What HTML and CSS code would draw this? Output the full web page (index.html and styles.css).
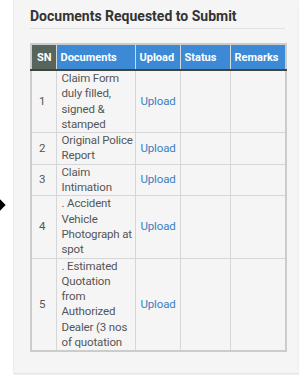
FILE: index.html
```html
<!DOCTYPE html>
<html>
<head>
<meta charset="utf-8">
<link rel="stylesheet" href="styles.css">
</head>
<body>
<span class="bullet"></span>
<div class="card">
  <h2 class="title">Documents Requested to Submit</h2>
  <hr class="rule">
  <table class="docs">
    <colgroup>
      <col class="c-sn"><col class="c-doc"><col class="c-up"><col class="c-st"><col class="c-re">
    </colgroup>
    <thead>
      <tr>
        <th class="sn-h">SN</th>
        <th>Documents</th>
        <th>Upload</th>
        <th>Status</th>
        <th>Remarks</th>
      </tr>
    </thead>
    <tbody>
      <tr><td class="sn">1</td><td>Claim Form duly filled, signed &amp; stamped</td><td><a class="up">Upload</a></td><td></td><td></td></tr>
      <tr><td class="sn">2</td><td>Original Police Report</td><td><a class="up">Upload</a></td><td></td><td></td></tr>
      <tr><td class="sn">3</td><td>Claim Intimation</td><td><a class="up">Upload</a></td><td></td><td></td></tr>
      <tr><td class="sn">4</td><td>. Accident Vehicle Photograph at spot</td><td><a class="up">Upload</a></td><td></td><td></td></tr>
      <tr><td class="sn">5</td><td>. Estimated Quotation from Authorized Dealer (3 nos of quotation</td><td><a class="up">Upload</a></td><td></td><td></td></tr>
    </tbody>
  </table>
</div>
</body>
</html>
```

FILE: styles.css
```css
html, body {
  margin: 0;
  padding: 0;
  background: #ffffff;
  font-family: Roboto, "Liberation Sans", sans-serif;
}
body {
  position: relative;
  height: 375px;
  overflow: hidden;
}
.bullet {
  position: absolute;
  left: -4px;
  top: 201px;
  width: 8px;
  height: 8px;
  background: #000;
  transform: rotate(45deg);
}
.card {
  margin-left: 13px;
  width: 285px;
  box-sizing: border-box;
  padding: 7px 13px 21px 16px;
  background: #f5f5f5;
  border-left: 1px solid #ececec;
  border-bottom: 1px solid #e6e6e6;
  box-shadow: 1px 1px 1px rgba(0,0,0,0.06);
}
.title {
  margin: 0;
  font-size: 14px;
  line-height: 18px;
  font-weight: 700;
  color: #333333;
}
.rule {
  margin: 3px 0 14px 0;
  border: 0;
  border-top: 1px solid #e2e2e2;
}
.docs {
  width: 255px;
  table-layout: fixed;
  border-collapse: collapse;
  border: 2px solid #cccccc;
  font-size: 11.5px;
  color: #555555;
}
.c-sn { width: 25px; }
.c-doc { width: 79px; }
.c-up { width: 45px; }
.c-st { width: 50px; }
.c-re { width: 56px; }
.docs th {
  background: #3c8ad6;
  color: #ffffff;
  font-size: 11px;
  font-weight: 700;
  text-align: left;
  height: 24px;
  padding: 0 3px 0 4px;
  border: 1px solid #d8d8d8;
  border-top: 1px solid #6d7a72;
  border-bottom: 2px solid #3d4540;
  white-space: nowrap;
}
.docs th.sn-h {
  background: #58655d;
  padding: 0 4px 0 5px;
}
.docs td {
  border: 1px solid #d6d6d6;
  padding: 0 1px 0 5px;
  line-height: 15.3px;
  letter-spacing: -0.15px;
  vertical-align: middle;
}
.docs td.sn {
  padding-left: 7px;
}
.up {
  color: #3b7fc0;
  text-decoration: none;
}
```
